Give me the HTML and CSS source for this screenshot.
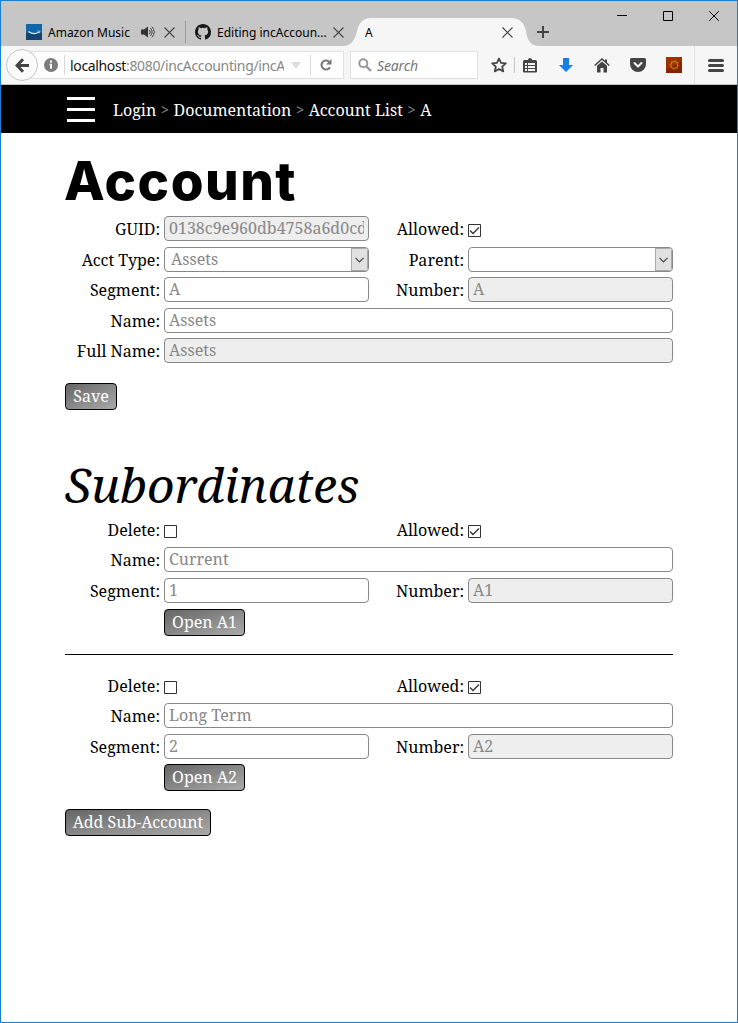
FILE: index.html
```html
<!DOCTYPE html>
<html lang="en">
<head>
<meta charset="utf-8">
<title>A</title>
<link rel="stylesheet" href="styles.css">
</head>
<body>
<div class="window">
  <header class="titlebar">
    <div class="tab tab-music">
      <svg class="favicon" width="16" height="16" viewBox="0 0 16 16"><rect width="16" height="16" fill="#0f66a8"/><rect y="9" width="16" height="7" fill="#12446f"/><path d="M2.500 7.500Q8 11.500 13 8" fill="none" stroke="#d5e8f6" stroke-width="1.300"/><path d="M11.500 7l2.500.2-.7 2" fill="none" stroke="#a8cbe4" stroke-width=".9"/></svg>
      <span class="tab-title title-music">Amazon Music</span>
      <svg class="sound" width="14" height="12" viewBox="0 0 14 12"><path d="M0 3.500h3L7 .5v11L3 8.500H0z" fill="#333"/><path d="M8.500 4q1.500 2 0 4M9.500 2.200q3.200 3.800 0 7.600M11 .8q4.400 5.200 0 10.400" fill="none" stroke="#444" stroke-width="1"/></svg>
      <svg class="close" width="11" height="11" viewBox="0 0 11 11"><path d="M.5.5l10 10M10.5.5l-10 10"/></svg>
    </div>
    <div class="tab tab-github">
      <svg class="favicon" width="16" height="16" viewBox="0 0 16 16"><path fill="#181818" d="M8 0C3.58 0 0 3.58 0 8c0 3.54 2.29 6.53 5.47 7.59.4.07.55-.17.55-.38 0-.19-.01-.82-.01-1.49-2.01.37-2.53-.49-2.69-.94-.09-.23-.48-.94-.82-1.13-.28-.15-.68-.52-.01-.53.63-.01 1.08.58 1.23.82.72 1.21 1.87.87 2.33.66.07-.52.28-.87.51-1.07-1.78-.2-3.64-.89-3.64-3.95 0-.87.31-1.59.82-2.15-.08-.2-.36-1.02.08-2.12 0 0 .67-.21 2.2.82a7.5 7.5 0 0 1 4 0c1.53-1.04 2.2-.82 2.2-.82.44 1.1.16 1.92.08 2.12.51.56.82 1.27.82 2.15 0 3.07-1.87 3.75-3.65 3.95.29.25.54.73.54 1.48 0 1.07-.01 1.93-.01 2.2 0 .21.15.46.55.38A8.01 8.01 0 0 0 16 8c0-4.42-3.58-8-8-8z"/></svg>
      <span class="tab-title title-github">Editing incAccoun...</span>
      <svg class="close" width="11" height="11" viewBox="0 0 11 11"><path d="M.5.5l10 10M10.5.5l-10 10"/></svg>
    </div>
    <div class="tab tab-active">
      <svg class="tab-shape" width="196" height="28" viewBox="0 0 196 28"><path d="M0 28C8 28 12 22 14 13C16 5 20 0 28 0H168C177 0 181 5 183 13C184 22 188 28 196 28z" fill="#f6f6f6"/></svg>
      <span class="tab-title title-active">A</span>
      <svg class="close" width="11" height="11" viewBox="0 0 11 11"><path d="M.5.5l10 10M10.5.5l-10 10"/></svg>
    </div>
    <svg class="new-tab" width="12" height="12" viewBox="0 0 12 12"><path d="M6 0v12M0 6h12" stroke="#444" stroke-width="2"/></svg>
    <div class="win-controls">
      <svg width="10" height="10" viewBox="0 0 10 10"><path d="M0 4.5h10"/></svg>
      <svg width="10" height="10" viewBox="0 0 10 10"><path d="M.5.5h9v9h-9z"/></svg>
      <svg width="10" height="10" viewBox="0 0 10 10"><path d="M.2.2l9.6 9.6M9.8.2L.2 9.8"/></svg>
    </div>
  </header>

  <div class="toolbar">
    <div class="back"><svg width="14" height="15" viewBox="0 0 14 15"><path d="M8 1.2L2 7.5l6 6.3M2 7.5h12" fill="none" stroke="#444" stroke-width="3"/></svg></div>
    <div class="urlbar">
      <svg class="info" width="14" height="14" viewBox="0 0 14 14"><circle cx="7" cy="7" r="7" fill="#7c7c7c"/><path d="M6 2.5h2v2H6zM5.500 5.800H8v5H6V7h-.5z" fill="#fff"/></svg>
      <span class="divider"></span>
      <span class="url"><b>localhost</b>:8080/incAccounting/incAc</span>
      <svg class="drop" width="10" height="7" viewBox="0 0 10 7"><path d="M0 0h10L5 7z" fill="#ddd"/></svg>
      <span class="divider"></span>
      <svg class="reload" width="12" height="12" viewBox="0 0 12 12"><path d="M9.200 2.800A4.500 4.500 0 1 0 10 8.200" fill="none" stroke="#777" stroke-width="2"/><path d="M11.500 0v5.500H6z" fill="#777"/></svg>
    </div>
    <div class="searchbar">
      <svg width="14" height="14" viewBox="0 0 14 14"><circle cx="5.300" cy="5.300" r="4" fill="none" stroke="#999" stroke-width="2"/><path d="M8.300 8.300L13 13" stroke="#999" stroke-width="2.400"/></svg>
      <span>Search</span>
    </div>
    <div class="tools">
      <svg width="16" height="16" viewBox="0 0 16 16"><path d="M8 1.500l2 4.400 4.800.5-3.600 3.200 1 4.800L8 12l-4.200 2.400 1-4.800L1.200 6.400 6 5.900z" fill="none" stroke="#444" stroke-width="1.800" stroke-linejoin="round"/></svg>
      <span class="tool-sep"></span>
      <svg class="list" width="14" height="15" viewBox="0 0 14 15"><path d="M5 2a2 2 0 0 1 4 0h3.500a1.500 1.500 0 0 1 1.500 1.500v9A1.500 1.500 0 0 1 12.500 14.500h-11A1.500 1.500 0 0 1 0 12.500v-9A1.500 1.500 0 0 1 1.500 2z" fill="#444"/><path d="M2 5h2v2H2zM5 5h7v2H5zM2 8h2v2H2zM5 8h7v2H5zM2 11h2v2H2zM5 11h7v2H5z" fill="#f6f6f6"/></svg>
      <svg class="download" width="14" height="14" viewBox="0 0 14 14"><path d="M4 0h6v7h4l-7 7-7-7h4z" fill="#1580ea"/></svg>
      <svg class="home" width="16" height="15" viewBox="0 0 16 15"><path d="M.7 7.500L8 1l7.300 6.500" fill="none" stroke="#444" stroke-width="1.500"/><path d="M3 7.800l5-4.300 5 4.300V14.500H9.500V10h-3v4.500H3zM11 1.500h2V5l-2-1.800z" fill="#444"/></svg>
      <svg class="pocket" width="16" height="14" viewBox="0 0 16 14"><path d="M1.500 0h13A1.500 1.500 0 0 1 16 1.500V6A8 8 0 0 1 0 6V1.500A1.500 1.500 0 0 1 1.500 0z" fill="#444"/><path d="M4.500 5L8 8.500 11.500 5" fill="none" stroke="#f6f6f6" stroke-width="2" stroke-linecap="round" stroke-linejoin="round"/></svg>
      <svg class="addon" width="16" height="16" viewBox="0 0 16 16"><rect width="16" height="16" fill="#872400"/><path d="M0 0h16v3Q12 8 7 9T0 14z" fill="#9c3200"/><circle cx="8.300" cy="8" r="3.500" fill="none" stroke="#d58a13" stroke-width="1"/><circle cx="8.300" cy="8" r="4.600" fill="none" stroke="#d58a13" stroke-width="1" stroke-dasharray="1 2.600"/></svg>
      <span class="menu-sep"></span>
      <svg class="menu" width="16" height="13" viewBox="0 0 16 13"><path d="M1.500 1.500h13M1.500 6.500h13M1.500 11.500h13" stroke="#444" stroke-width="3" stroke-linecap="round"/></svg>
    </div>
  </div>

  <nav class="breadcrumbs">
    <svg width="28" height="26" viewBox="0 0 28 26"><path d="M0 1.500h28M0 12.500h28M0 23.500h28" stroke="#fff" stroke-width="3"/></svg>
    <div class="crumbs"><span>Login</span><i>&gt;</i><span>Documentation</span><i>&gt;</i><span>Account List</span><i>&gt;</i><span>A</span></div>
  </nav>

  <main class="page">
    <h1>Account</h1>
    <section class="form account-form">
      <label>GUID:</label><div class="field readonly"><span>0138c9e960db4758a6d0cd</span></div>
      <label>Allowed:</label><div class="check"><svg width="13" height="13" viewBox="0 0 13 13"><path class="box" d="M.5.5h12v12H.5z"/><path class="tick" d="M2 6.500l3 3 6-6"/></svg></div>
      <label>Acct Type:</label><div class="field select"><span>Assets</span><em><svg width="9" height="6" viewBox="0 0 9 6"><path d="M.5.8l4 4 4-4"/></svg></em></div>
      <label>Parent:</label><div class="field select"><span></span><em><svg width="9" height="6" viewBox="0 0 9 6"><path d="M.5.8l4 4 4-4"/></svg></em></div>
      <label>Segment:</label><div class="field"><span>A</span></div>
      <label>Number:</label><div class="field readonly"><span>A</span></div>
      <label>Name:</label><div class="field wide"><span>Assets</span></div>
      <label>Full Name:</label><div class="field wide readonly"><span>Assets</span></div>
    </section>
    <button class="btn save">Save</button>

    <h2>Subordinates</h2>
    <section class="form first">
      <label>Delete:</label><div class="check"><svg width="13" height="13" viewBox="0 0 13 13"><path class="box" d="M.5.5h12v12H.5z"/></svg></div>
      <label>Allowed:</label><div class="check"><svg width="13" height="13" viewBox="0 0 13 13"><path class="box" d="M.5.5h12v12H.5z"/><path class="tick" d="M2 6.500l3 3 6-6"/></svg></div>
      <label>Name:</label><div class="field wide"><span>Current</span></div>
      <label>Segment:</label><div class="field"><span>1</span></div>
      <label>Number:</label><div class="field readonly"><span>A1</span></div>
      <button class="btn open">Open A1</button>
    </section>
    <hr>
    <section class="form second">
      <label>Delete:</label><div class="check"><svg width="13" height="13" viewBox="0 0 13 13"><path class="box" d="M.5.5h12v12H.5z"/></svg></div>
      <label>Allowed:</label><div class="check"><svg width="13" height="13" viewBox="0 0 13 13"><path class="box" d="M.5.5h12v12H.5z"/><path class="tick" d="M2 6.500l3 3 6-6"/></svg></div>
      <label>Name:</label><div class="field wide"><span>Long Term</span></div>
      <label>Segment:</label><div class="field"><span>2</span></div>
      <label>Number:</label><div class="field readonly"><span>A2</span></div>
      <button class="btn open">Open A2</button>
    </section>
    <button class="btn add">Add Sub-Account</button>
  </main>
</div>
</body>
</html>
```
FILE: styles.css
```css
* { box-sizing: border-box; }
svg { display: block; flex: none; }
body {
  margin: 0;
  background: #fff;
  color: #000;
  font-family: "Noto Serif", "Droid Serif", "DejaVu Serif Condensed", "DejaVu Serif", serif;
  font-size: 16px;
}
.window { height: 1023px; border: 1px solid #1a7fd2; overflow: hidden; }

.titlebar {
  display: flex;
  height: 45px;
  padding-top: 17px;
  background: #c6c6c6;
  font-family: "Noto Sans", sans-serif;
  font-size: 12px;
}
.tab { display: flex; align-items: center; height: 28px; white-space: nowrap; }
.tab-title { flex: none; margin-left: 6px; }
.tab-music { width: 184px; padding-left: 25px; }
.tab-github { width: 185px; height: 22px; margin-top: 3px; padding-left: 9px; border-left: 1px solid #999; }
.tab-active { position: relative; width: 196px; margin-left: -27px; padding-left: 16px; }
.title-music { width: 93px; }
.title-github { width: 116px; }
.title-active { position: relative; width: 137px; }
.close path { stroke: #444; stroke-width: 1.1; fill: none; }
.sound { margin-right: 9px; }
.tab-active .close { position: relative; }
.tab-shape { position: absolute; left: 0; top: 0; }
.new-tab { margin: 8px 0 0 -2px; }
.win-controls { display: flex; gap: 36px; margin: -7px 0 0 68px; }
.win-controls path { fill: none; stroke: #000; }

.toolbar {
  display: flex;
  align-items: center;
  height: 39px;
  background: #f6f6f6;
  border-bottom: 1px solid #c4c4c4;
  font-family: "Noto Sans", sans-serif;
}
.back {
  display: flex;
  align-items: center;
  justify-content: center;
  position: relative;
  z-index: 1;
  width: 32px;
  height: 32px;
  margin-left: 5px;
  border: 1px solid #c6c6c6;
  border-radius: 50%;
  background: #fbfbfb;
}
.urlbar, .searchbar {
  display: flex;
  align-items: center;
  height: 28px;
  border: 1px solid #e0e0e0;
  background: #fff;
}
.urlbar { width: 313px; margin-left: -7px; padding-left: 12px; }
.divider { width: 1px; height: 20px; background: #d8d8d8; margin-left: 6px; }
.url {
  width: 214px;
  margin-left: 5px;
  overflow: hidden;
  white-space: nowrap;
  font-size: 14px;
  letter-spacing: -0.35px;
  line-height: 20px;
  padding-top: 1px;
  color: #888;
}
.url b { font-weight: 400; color: #111; }
.drop { margin-left: 7px; }
.urlbar .drop + .divider { margin-left: 9px; }
.reload { margin-left: 9px; }
.searchbar { width: 128px; margin-left: 6px; padding-left: 7px; font-size: 14px; letter-spacing: -0.15px; font-style: italic; color: #777; }
.searchbar span { margin-left: 5px; padding-top: 1px; }
.tools { display: flex; align-items: center; margin-left: 13px; }
.tool-sep { width: 1px; height: 16px; margin: 0 8px 0 7px; background: #c4c4c4; }
.download { margin-left: 22px; }
.home { margin-left: 21px; }
.pocket { margin-left: 20px; }
.addon { margin-left: 20px; }
.menu-sep { width: 1px; height: 38px; margin: 0 13px 0 12px; background: #e0e0e0; }

.breadcrumbs {
  display: flex;
  height: 48px;
  padding: 12px 0 0 67px;
  background: #000;
  color: #fff;
}
.breadcrumbs svg { margin-left: -1px; }
.crumbs { display: flex; margin-left: 18px; line-height: 27px; }
.crumbs i { width: 17.3px; text-align: center; color: #888; font: 13.5px/27px "Noto Sans", sans-serif; }

.page { width: 608px; margin-left: 64px; }
h1 {
  height: 83px;
  margin: 0 0 0 -1px;
  padding-top: 16px;
  font: 800 53px/64px Inter, sans-serif;
  letter-spacing: 1.5px;
}
.form { display: grid; grid-template-columns: 99px 205px 99px 205px; }
.account-form { grid-template-rows: 31px 30px 31px 30px 25px; }
.form label { padding-right: 4px; text-align: right; line-height: 26px; height: 25px; white-space: nowrap; }
.field {
  display: flex;
  height: 25px;
  padding: 0 4px;
  border: 1px solid #888;
  border-radius: 4px;
  line-height: 23px;
  color: #888;
  overflow: hidden;
}
.field span { flex: 1; min-width: 0; overflow: hidden; white-space: nowrap; }
.wide { grid-column: 2 / 5; }
.readonly { background: #eee; }
.select { padding: 0 0 0 6px; }
.select em {
  display: flex;
  align-items: center;
  justify-content: center;
  width: 17px;
  border: 1px solid #aaa;
  background: #e1e1e1;
}
.select em path { fill: none; stroke: #444; stroke-width: 1.2; }
.check { padding-top: 8px; }
.box { fill: #fff; stroke: #333; }
.tick { fill: none; stroke: #333; stroke-width: 1.3; }
.btn {
  display: block;
  height: 27px;
  padding: 0 0 1px;
  border: 1px solid #000;
  border-radius: 4px;
  background: linear-gradient(to bottom right, #666, #aaa);
  color: #fff;
  font: inherit;
  line-height: 24px;
  text-align: center;
  white-space: nowrap;
}
.save { width: 52px; margin-top: 20px; }
.open { grid-column: 2; width: 81px; }
.add { width: 146px; margin-top: 18px; }
h2 {
  height: 107px;
  margin: 0;
  padding-top: 43px;
  font-size: 48px;
  line-height: 64px;
  font-weight: 400;
  font-style: italic;
  letter-spacing: 0.08px;
}
.first { grid-template-rows: 30px 31px 31px 27px; }
.second { grid-template-rows: 30px 31px 30px 27px; }
hr { height: 1px; margin: 18px 0; border: 0; background: #000; }
```
